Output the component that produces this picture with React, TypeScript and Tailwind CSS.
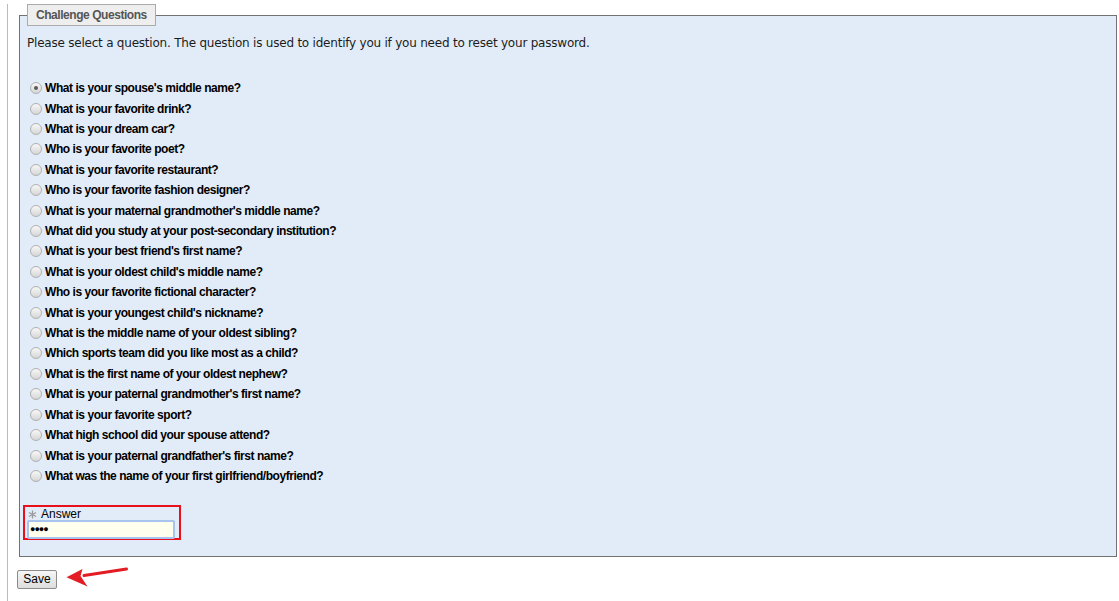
const questions = [
  "What is your spouse's middle name?",
  "What is your favorite drink?",
  "What is your dream car?",
  "Who is your favorite poet?",
  "What is your favorite restaurant?",
  "Who is your favorite fashion designer?",
  "What is your maternal grandmother's middle name?",
  "What did you study at your post-secondary institution?",
  "What is your best friend's first name?",
  "What is your oldest child's middle name?",
  "Who is your favorite fictional character?",
  "What is your youngest child's nickname?",
  "What is the middle name of your oldest sibling?",
  "Which sports team did you like most as a child?",
  "What is the first name of your oldest nephew?",
  "What is your paternal grandmother's first name?",
  "What is your favorite sport?",
  "What high school did your spouse attend?",
  "What is your paternal grandfather's first name?",
  "What was the name of your first girlfriend/boyfriend?",
];

function Radio({ checked }: { checked?: boolean }) {
  return (
    <span className="flex items-center justify-center w-[12px] h-[12px] rounded-full border border-[#b0b0b0] bg-gradient-to-b from-[#f8f8f8] to-[#d6d6d6] shrink-0">
      {checked && <span className="w-[4px] h-[4px] rounded-full bg-[#5a5a5a]" />}
    </span>
  );
}

export default function App() {
  return (
    <div className="w-[1119px] h-[601px] bg-white overflow-hidden font-['Liberation_Sans',Arial,sans-serif] text-[12px] text-black">
      <div className="ml-[7px] w-[1112px] h-[600px] border-l border-b border-[#a8bedb]">
        <fieldset className="ml-[11px] mt-[4px] w-[1098px] border border-[#727272] bg-[#e2ecf8] px-[7px] pt-[9px] pb-[16px]">
          <legend className="h-[22px] px-[8px] border border-[#ababab] bg-[#eeeeee] text-[#555] font-bold leading-[20px] tracking-[-0.45px]">
            Challenge Questions
          </legend>
          <p className="font-['DejaVu_Sans',Verdana,sans-serif] text-[12px] leading-[16px] tracking-[-0.22px] text-[#1c1c1c]">
            Please select a question. The question is used to identify you if you need to reset your password.
          </p>

          <div className="mt-[27px] pl-[3px]">
            {questions.map((q, i) => (
              <label key={q} className="flex items-center gap-[3px] h-[20.42px] font-bold tracking-[-0.45px]">
                <Radio checked={i === 0} />
                <span>{q}</span>
              </label>
            ))}
          </div>

          <div className="mt-[19px] -ml-[4px] w-[158px] h-[35px] border-2 border-[#e8101a] px-[2px]">
            <div className="flex items-center h-[12px] mt-[1px]">
              <svg width="9" height="9" viewBox="0 0 9 9" className="ml-[1px]">
                <g stroke="#9a9a9a" strokeWidth="1.3">
                  <line x1="4.5" y1="0.5" x2="4.5" y2="8.5" />
                  <line x1="1" y1="2.5" x2="8" y2="6.5" />
                  <line x1="1" y1="6.5" x2="8" y2="2.5" />
                </g>
              </svg>
              <span className="ml-[4px] leading-[12px]">Answer</span>
            </div>
            <div className="w-[148px] h-[19px] border-2 border-[#a6c4ee] rounded-[2px] bg-[#ffffee] flex items-center pl-[1px] text-[9px] leading-none tracking-[-1px]">
              ●●●●
            </div>
          </div>
        </fieldset>

        <div className="flex items-center mt-[13px] ml-[9px]">
          <button className="h-[19px] w-[40px] border border-[#8c8c8c] rounded-[2px] bg-gradient-to-b from-[#f6f6f6] to-[#dddddd] text-[12px] leading-[17px] text-black">
            Save
          </button>
          <svg width="66" height="24" viewBox="0 0 66 24" className="ml-[7px] -mt-[6px]">
            <path d="M62.5 4 L20 10.5" stroke="#e31b23" strokeWidth="3" strokeLinecap="round" />
            <path d="M2.5 12.2 L18.5 4 L16.5 11 L23.5 21.5 Z" fill="#e31b23" />
          </svg>
        </div>
      </div>
    </div>
  );
}
